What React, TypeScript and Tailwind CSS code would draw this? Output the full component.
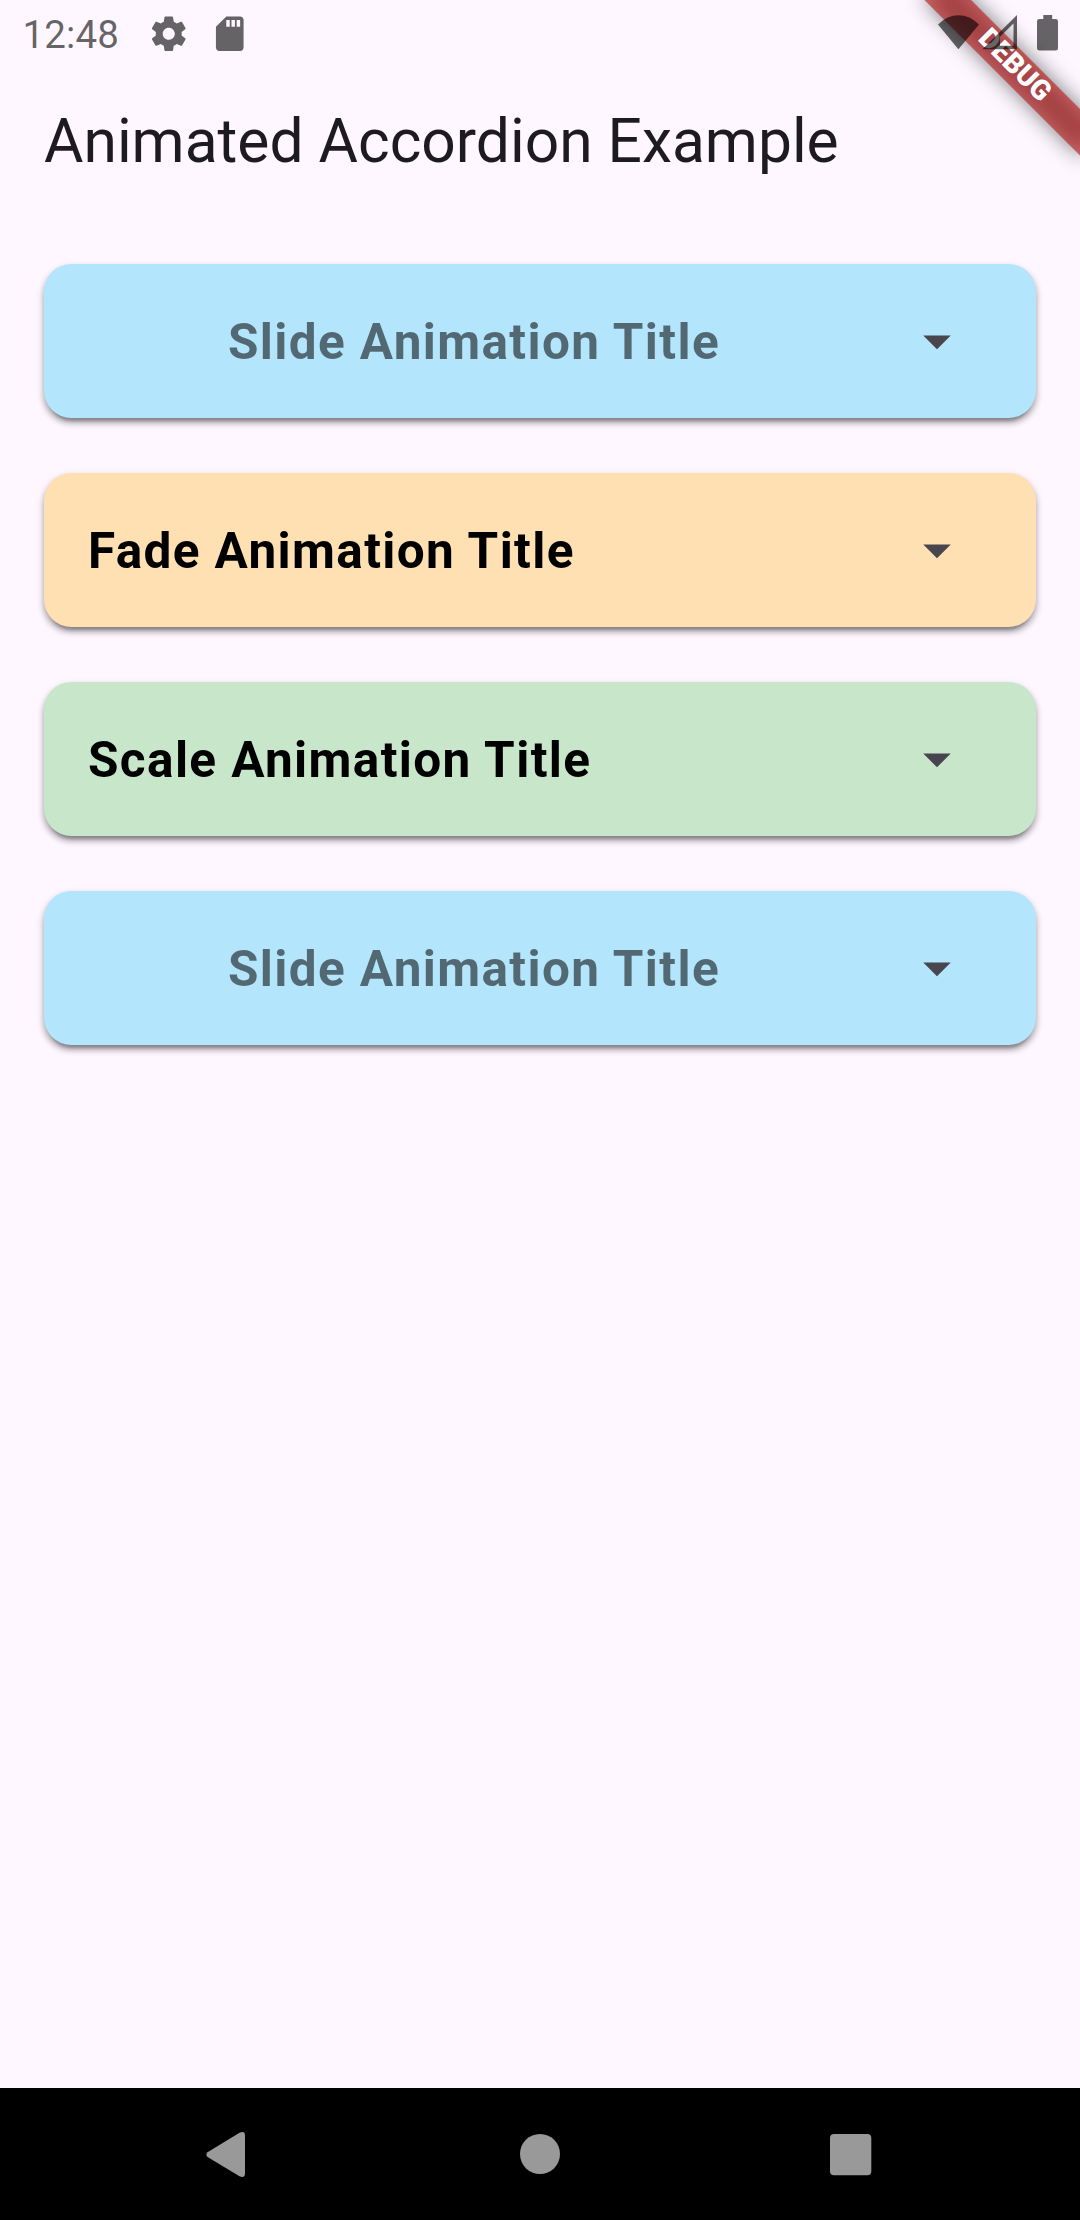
import React from "react";

const panels = [
  { title: "Slide Animation Title", card: "bg-[#b3e5fc]", text: "pr-[44px] text-center text-black/54" },
  { title: "Fade Animation Title", card: "bg-[#ffe0b2]", text: "text-left text-black" },
  { title: "Scale Animation Title", card: "bg-[#c8e6c9]", text: "text-left text-black" },
  { title: "Slide Animation Title", card: "bg-[#b3e5fc]", text: "pr-[44px] text-center text-black/54" },
];

function GearIcon() {
  return (
    <svg className="size-[41.5px]" viewBox="0 0 24 24" fill="currentColor">
      <path d="M19.43 12.98c.04-.32.07-.64.07-.98s-.03-.66-.07-.98l2.11-1.65c.19-.15.24-.42.12-.64l-2-3.46c-.12-.22-.39-.3-.61-.22l-2.49 1c-.52-.4-1.08-.73-1.69-.98l-.38-2.65C14.46 2.18 14.25 2 14 2h-4c-.25 0-.46.18-.49.42l-.38 2.65c-.61.25-1.17.59-1.69.98l-2.49-1c-.23-.09-.49 0-.61.22l-2 3.46c-.13.22-.07.49.12.64l2.11 1.65c-.04.32-.07.65-.07.98s.03.66.07.98l-2.11 1.65c-.19.15-.24.42-.12.64l2 3.46c.12.22.39.3.61.22l2.49-1c.52.4 1.08.73 1.69.98l.38 2.65c.03.24.24.42.49.42h4c.25 0 .46-.18.49-.42l.38-2.65c.61-.25 1.17-.59 1.69-.98l2.49 1c.23.09.49 0 .61-.22l2-3.46c.12-.22.07-.49-.12-.64l-2.11-1.65zM12 15.5c-1.93 0-3.5-1.57-3.5-3.5s1.57-3.5 3.5-3.5 3.5 1.57 3.5 3.5-1.57 3.5-3.5 3.5z" />
    </svg>
  );
}

function SdCardIcon() {
  return (
    <svg className="size-[41.5px]" viewBox="0 0 24 24" fill="currentColor">
      <path d="M18 2h-8L4.02 8 4 20c0 1.1.9 2 2 2h12c1.1 0 2-.9 2-2V4c0-1.1-.9-2-2-2zm-6 6h-2V4h2v4zm3 0h-2V4h2v4zm3 0h-2V4h2v4z" />
    </svg>
  );
}

function StatusBar() {
  return (
    <header className="relative z-20 flex h-[66px] items-start justify-between text-black/60">
      <div className="flex items-start pl-[22.5px]">
        <span className="w-[125.5px] pt-[12px] text-[38.5px] leading-[45px] tracking-[0.15px]">12:48</span>
        <div className="flex gap-[19px] pt-[12.6px]">
          <GearIcon />
          <SdCardIcon />
        </div>
      </div>
      <svg className="h-[66px] w-[150px]" viewBox="930 0 150 66" fill="currentColor">
        <path d="M958.4 49.3 938 24.5Q947 15.3 958.4 15.3T979 24.5Z" />
        <path fillRule="evenodd" d="M982.5 49.3H1017V15ZM1000 45.8V36.8L1013.5 23.5V45.8Z" />
        <path d="M1043.3 15h8.9v4h3.4q2.4 0 2.4 2.4v26.8q0 2.4-2.4 2.4h-16.2q-2.4 0-2.4-2.4v-26.8q0-2.4 2.4-2.4h3.9Z" />
      </svg>
    </header>
  );
}

function DebugBanner() {
  return (
    <div className="pointer-events-none absolute top-0 right-0 z-10 size-[220px] overflow-hidden">
      <div className="absolute top-0 left-full h-0 w-0 origin-top-left rotate-45">
        <div className="absolute top-[77px] left-[-110px] h-[33px] w-[220px] bg-black/50 blur-[10.9px]" />
        <div className="absolute top-[77px] left-[-110px] flex h-[33px] w-[220px] items-center justify-center bg-[#b71c1c]/63 pb-[3px] text-[28px] leading-none font-black text-white">
          DEBUG
        </div>
      </div>
    </div>
  );
}

function AccordionCard({ title, card, text }: { title: string; card: string; text: string }) {
  return (
    <button
      className={`flex h-[154px] w-full items-center rounded-[27.5px] pr-[66px] pl-[44px] shadow-[0_8px_3px_-5px_rgba(0,0,0,0.2),0_5px_6px_rgba(0,0,0,0.28),0_3px_8px_rgba(0,0,0,0.12)] ${card}`}
    >
      <span className={`flex-1 pt-[2px] text-[49.5px] leading-[58px] font-bold tracking-[1.375px] ${text}`}>{title}</span>
      <svg className="size-[66px]" viewBox="0 0 24 24" fill="#49454f">
        <path d="M7 10l5 5 5-5z" />
      </svg>
    </button>
  );
}

function NavigationBar() {
  return (
    <nav className="h-[132px] bg-black">
      <svg className="h-[132px] w-full" viewBox="0 0 1080 132" fill="#999999">
        <path d="M207.5 64.2 239.5 44.8Q245 42.5 245 47.5V85.5Q245 90.5 239.5 88.2L207.5 69Q205.2 66.6 207.5 64.2Z" />
        <circle cx="540" cy="66" r="20" />
        <rect x="830" y="46" width="41.3" height="41.3" rx="4" />
      </svg>
    </nav>
  );
}

export default function App() {
  return (
    <div className="relative flex h-[2220px] w-[1080px] flex-col overflow-hidden bg-[#fef7ff] font-['Roboto',sans-serif]">
      <StatusBar />
      <DebugBanner />
      <div className="flex h-[154px] items-center px-[44px] pb-[3px]">
        <h1 className="text-[60.5px] leading-[77px] text-[#1d1b20]">Animated Accordion Example</h1>
      </div>
      <main className="flex flex-1 flex-col gap-[55px] p-[44px]">
        {panels.map((panel, index) => (
          <AccordionCard key={index} {...panel} />
        ))}
      </main>
      <NavigationBar />
    </div>
  );
}
